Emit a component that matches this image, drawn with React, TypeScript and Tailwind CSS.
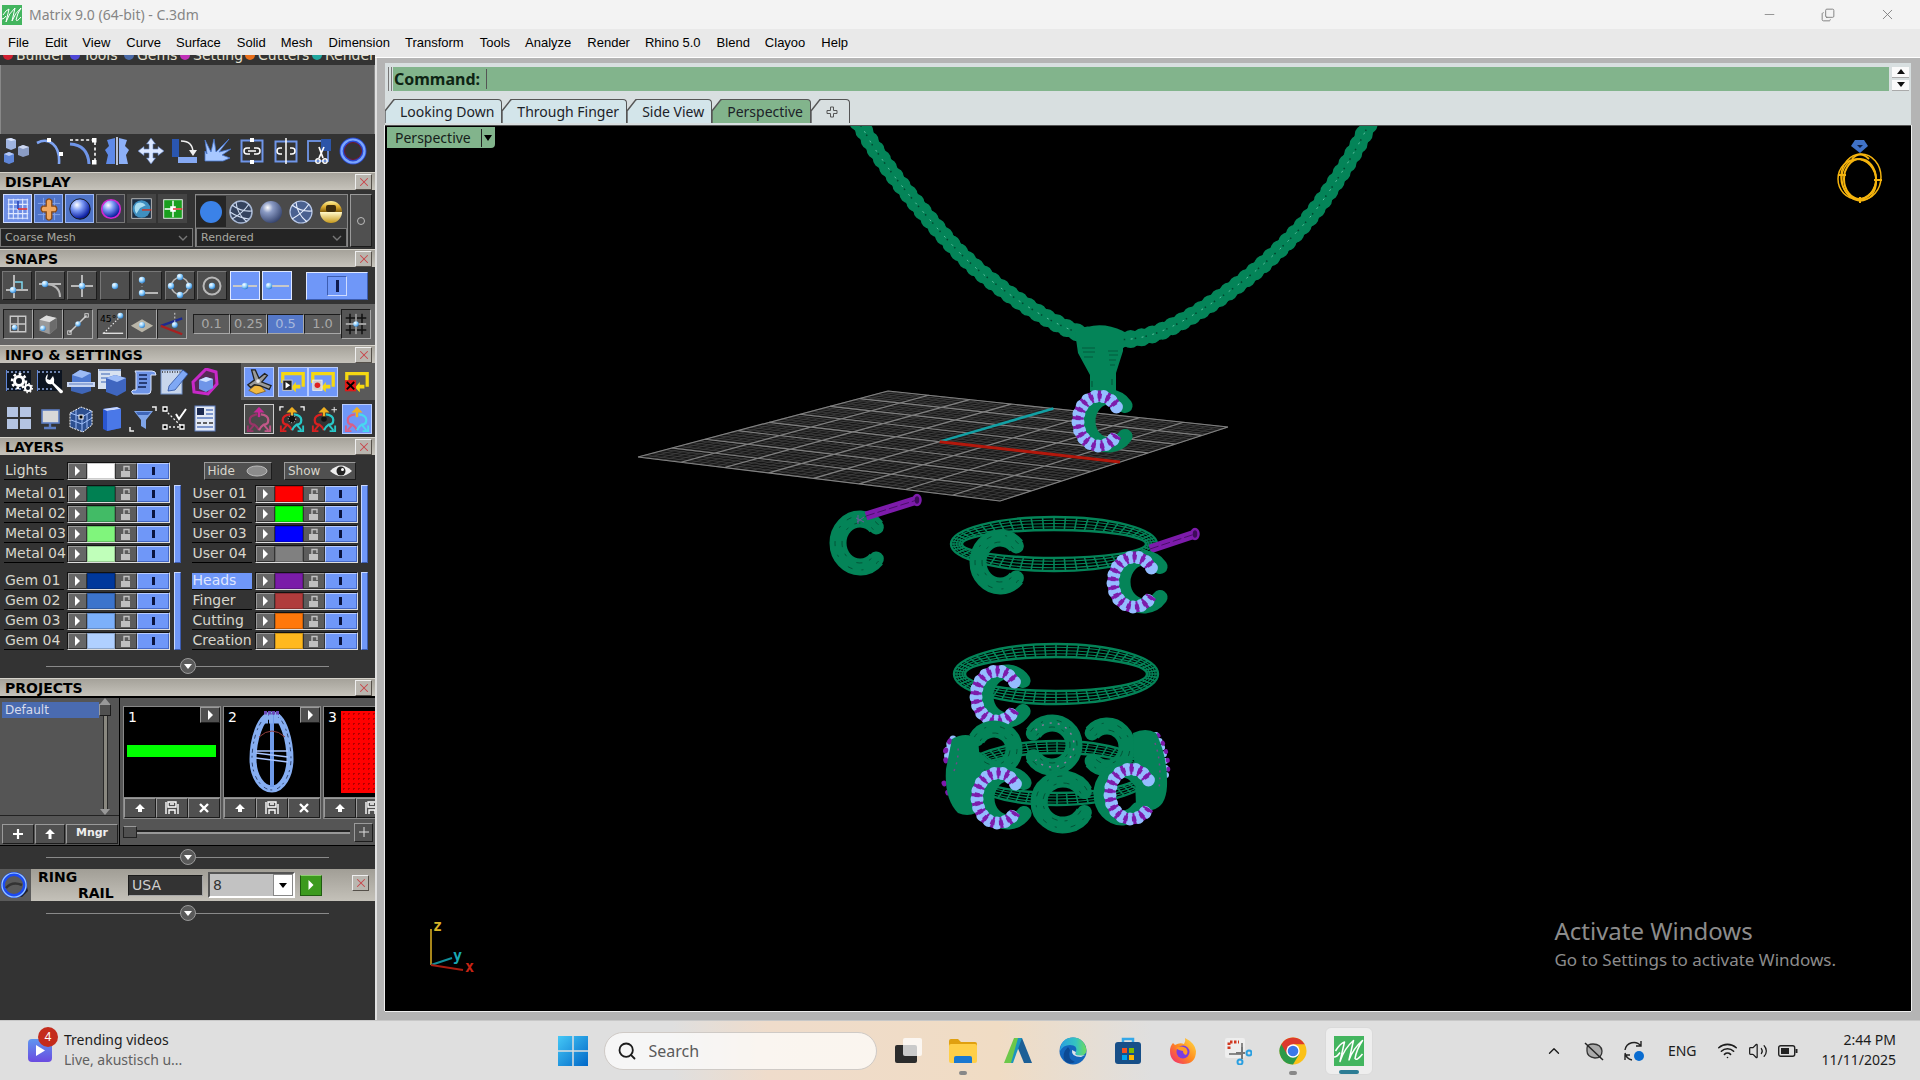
// Matrix desktop: jewelry CAD window with side panels, viewport and taskbar
import type { ReactNode } from "react"
import { Copy, Minus, X, Search, ChevronUp, Wifi, Volume2 } from "lucide-react"

const MENU = [
  "File", "Edit", "View", "Curve", "Surface", "Solid", "Mesh", "Dimension", "Transform",
  "Tools", "Analyze", "Render", "Rhino 5.0", "Blend", "Clayoo", "Help",
]

const UI = "font-['Noto_Sans','Open_Sans',sans-serif]"
const PANEL = "font-['DejaVu_Sans',sans-serif]"

const raised = "border border-t-[#9a9a9a] border-l-[#9a9a9a] border-b-[#1c1c1c] border-r-[#1c1c1c]"
const sunken = "border border-t-[#1c1c1c] border-l-[#1c1c1c] border-b-[#a8a8a8] border-r-[#a8a8a8]"

// ---------- icon helpers ----------

interface IcoProps {
  children: ReactNode
  className?: string
}

function Ico({ children, className = "w-7 h-7" }: IcoProps) {
  return (
    <svg viewBox="0 0 28 28" fill="none" className={`shrink-0 ${className}`} aria-hidden="true">
      {children}
    </svg>
  )
}

function Gradients() {
  return (
    <svg className="absolute w-0 h-0" aria-hidden="true">
      <defs>
        <radialGradient id="ballBlue" cx="0.35" cy="0.3" r="0.8">
          <stop offset="0" stopColor="#ffffff" />
          <stop offset="0.35" stopColor="#7d9bf5" />
          <stop offset="0.8" stopColor="#1226a8" />
          <stop offset="1" stopColor="#060c50" />
        </radialGradient>
        <radialGradient id="ballGray" cx="0.35" cy="0.3" r="0.8">
          <stop offset="0" stopColor="#ffffff" />
          <stop offset="0.3" stopColor="#8b9bc4" />
          <stop offset="1" stopColor="#2c3a63" />
        </radialGradient>
        <radialGradient id="dot" cx="0.35" cy="0.3" r="0.8">
          <stop offset="0" stopColor="#ffffff" />
          <stop offset="0.5" stopColor="#8fd0ff" />
          <stop offset="1" stopColor="#1d6fc0" />
        </radialGradient>
        <linearGradient id="gold" x1="0" y1="0" x2="0" y2="1">
          <stop offset="0" stopColor="#fff3a0" />
          <stop offset="0.25" stopColor="#e0b030" />
          <stop offset="0.48" stopColor="#8a6410" />
          <stop offset="0.52" stopColor="#fff6c4" />
          <stop offset="1" stopColor="#c79a1c" />
        </linearGradient>
        <linearGradient id="win" x1="0" y1="0" x2="1" y2="1">
          <stop offset="0" stopColor="#45c8f6" />
          <stop offset="1" stopColor="#0067c8" />
        </linearGradient>
        <linearGradient id="edge" x1="0" y1="0" x2="1" y2="0">
          <stop offset="0" stopColor="#2a9fe0" />
          <stop offset="0.6" stopColor="#35c4c0" />
          <stop offset="1" stopColor="#6fdc5a" />
        </linearGradient>
        <linearGradient id="fox" x1="1" y1="0" x2="0" y2="1">
          <stop offset="0" stopColor="#ffe14a" />
          <stop offset="0.5" stopColor="#ff8a1e" />
          <stop offset="1" stopColor="#f0207a" />
        </linearGradient>
        <linearGradient id="video" x1="0" y1="0" x2="0" y2="1">
          <stop offset="0" stopColor="#5f96f0" />
          <stop offset="1" stopColor="#6a4be0" />
        </linearGradient>
      </defs>
    </svg>
  )
}

function Dot({ x, y }: { x: number; y: number }) {
  return <circle cx={x} cy={y} r="3.2" fill="url(#dot)" />
}

function MatrixLogo({ className }: { className: string }) {
  return (
    <svg viewBox="0 0 20 20" className={className} aria-hidden="true">
      <rect width="20" height="20" fill="#43b55f" />
      <path d="M1 10Q4 5 7 4L4 17Q7 8 13 3L10 16Q13 8 19 3Q15 9 14 15Q15 17 19 12M0 14Q2 14 4 11" fill="none" stroke="#fff" strokeWidth="1" strokeLinejoin="round" />
    </svg>
  )
}

// ---------- title bar and menu ----------

function TitleBar() {
  return (
    <header className={`flex h-[29px] items-center bg-[#f3f3f3] pl-0.5 text-[14px] text-[#858585] ${UI}`}>
      <MatrixLogo className="w-5 h-5" />
      <span className="ml-[7px]">Matrix 9.0 (64-bit) - C.3dm</span>
      <div className="ml-auto flex items-center gap-[44px] pr-6 text-[#777]">
        <button aria-label="Minimize"><Minus size={15} strokeWidth={1.2} /></button>
        <button aria-label="Restore"><Copy size={14} strokeWidth={1.5} className="-scale-y-100" /></button>
        <button aria-label="Close"><X size={17} strokeWidth={1.2} /></button>
      </div>
    </header>
  )
}

function MenuBar() {
  return (
    <nav className="flex h-[26px] items-center gap-[15px] bg-[#e9e9e9] px-2 pt-0.5 font-['Liberation_Sans',sans-serif] text-[13px] text-black">
      {MENU.map((m) => (
        <button key={m} className="odd:pr-px">{m}</button>
      ))}
    </nav>
  )
}

// ---------- side panel building blocks ----------

function CloseButton() {
  return (
    <button aria-label="Close" className="flex h-4 w-[17px] items-center justify-center border border-t-[#eee] border-l-[#eee] border-b-[#55504a] border-r-[#55504a] bg-[#b9b6af] text-[#c8464a]">
      <X size={14} strokeWidth={1.8} />
    </button>
  )
}

function SectionHeader({ title }: { title: string }) {
  return (
    <div className="flex h-[18px] items-center justify-between border-t border-[#d5d2ca] bg-linear-to-b from-[#a5a29a] to-[#c6c3bb] pl-[5px] pr-[3px]">
      <h2 className="text-[14px] leading-[16px] font-bold text-black">{title}</h2>
      <CloseButton />
    </div>
  )
}

function Expander() {
  return (
    <div className="relative mx-[46px] flex h-4 items-center justify-center">
      <div className="absolute inset-x-0 top-2 h-px bg-[#8a8a8a]" />
      <button aria-label="Expand" className="relative flex h-4 w-4 items-center justify-center rounded-full border border-[#999] bg-[#5a5a5a]">
        <svg viewBox="0 0 8 5" className="h-[5px] w-2"><path d="M0 0H8L4 5Z" fill="#fff" /></svg>
      </button>
    </div>
  )
}

const TABS = [
  { name: "Builder", color: "bg-[#d02030]", width: "w-[67px]" },
  { name: "Tools", color: "bg-[#5048d8]", width: "w-[54px]" },
  { name: "Gems", color: "bg-[#4a6aa8]", width: "w-[56px]" },
  { name: "Setting", color: "bg-[#c030b8]", width: "w-[65px]" },
  { name: "Cutters", color: "bg-[#e8701c]", width: "w-[67px]" },
  { name: "Render", color: "bg-[#20a8a0]", width: "w-[66px]" },
]

function ToolTabs() {
  return (
    <div className="flex h-[10px] items-end overflow-hidden bg-[#333] pb-0.5 pl-[3px] text-[14px] leading-[16px] text-[#e4e0d0]">
      {TABS.map((t) => (
        <button key={t.name} className={`flex shrink-0 items-center gap-[3px] ${t.width}`}>
          <span className={`h-[10px] w-[10px] shrink-0 rounded-full ${t.color}`} />
          {t.name}
        </button>
      ))}
    </div>
  )
}

// ---------- toolbar ----------

const TOOLS: [string, ReactNode][] = [
  ["Array", <>
    <path d="M4 2l5-1 5 2v8l-5 2-5-2z" fill="#9fb4e0" /><path d="M4 2l5 2 5-1-5-2z" fill="#dfe8ff" />
    <path d="M2 17l5-2 5 2v8l-5 2-5-2z" fill="#5f86d8" /><path d="M2 17l5 2 5-2-5-2z" fill="#b7caf5" />
    <path d="M16 10l5-2 6 2v8l-6 2-5-2z" fill="#8a9cc4" /><path d="M16 10l5 2 6-2-6-2z" fill="#cfd9f2" />
  </>],
  ["Edit points", <>
    <path d="M1 6Q10 1 17 7T23 27" stroke="#7fa4f2" strokeWidth="2.6" />
    <rect x="11" y="1" width="4" height="4" fill="#fff" /><rect x="23" y="15" width="4" height="4" fill="#fff" />
  </>],
  ["Extend curve", <>
    <path d="M1 3H26V26" stroke="#fff" strokeWidth="1.6" strokeDasharray="3 2.4" />
    <path d="M1 7Q19 8 20 27" stroke="#6f95e8" strokeWidth="3" />
    <rect x="23" y="1" width="4.5" height="4.5" fill="#fff" /><rect x="23" y="23" width="4.5" height="4.5" fill="#fff" />
  </>],
  ["Mirror", <>
    <path d="M12 1L4 3 6 9 2 13 5 18 3 27H12Z" fill="#5f8ae8" /><path d="M16 1l8 2-2 6 4 4-3 5 2 9H16Z" fill="#8db0f7" />
    <path d="M14 0V28" stroke="#dfe8ff" strokeWidth="1.6" />
  </>],
  ["Move", <path d="M14 1l4.500 6H16v5h5V9.500l6 4.500-6 4.500V16h-5v5h2.500L14 27l-4.500-6H12v-5H7v2.500L1 14l6-4.500V12h5V7H9.500Z" fill="#dbe7ff" stroke="#5c7cc0" strokeWidth="0.6" />],
  ["Rotate", <>
    <rect x="2" y="2" width="7" height="18" fill="#2a56b0" /><rect x="8" y="20" width="19" height="6" fill="#86a9f2" />
    <path d="M11 4Q23 4 23 16" stroke="#eee" strokeWidth="1.5" /><path d="M19 13l4 6 4-6z" fill="#eee" />
  </>],
  ["Explode", <path d="M1 3l6 12L10 2l2 13L25 2 15 15l12-3-9 6 8 3-7 3H1V14l2 3z" fill="#a8c8ff" stroke="#4a78d0" strokeWidth="0.8" />],
  ["Link", <>
    <rect x="3.500" y="3.500" width="21" height="21" stroke="#6f95e8" strokeWidth="2" />
    <path d="M12 11H9q-3 0-3 3t3 3h3M16 11h3q3 0 3 3t-3 3h-3M10 14h8" stroke="#fff" strokeWidth="1.5" />
    <rect x="12" y="1" width="4" height="4" fill="#fff" /><rect x="12" y="23" width="4" height="4" fill="#fff" />
  </>],
  ["Split link", <>
    <rect x="3.500" y="4.500" width="21" height="20" stroke="#6f95e8" strokeWidth="2" />
    <path d="M10 11H8q-3 0-3 3t3 3h2M18 11h2q3 0 3 3t-3 3h-2M14 1v26" stroke="#fff" strokeWidth="1.5" />
  </>],
  ["Trim", <>
    <rect x="3" y="4" width="20" height="20" stroke="#6f95e8" strokeWidth="1.8" /><rect x="16" y="2" width="10" height="12" fill="#2c55a8" />
    <path d="M14 10l4 11M19 10l-5 11" stroke="#fff" strokeWidth="1.7" /><circle cx="13" cy="24" r="2.200" stroke="#fff" strokeWidth="1.400" /><circle cx="20" cy="24" r="2.200" stroke="#fff" strokeWidth="1.400" />
  </>],
  ["Ring", <>
    <circle cx="14" cy="14" r="11" stroke="#2a4ad0" strokeWidth="5" /><circle cx="14" cy="14" r="11.500" stroke="#7aa6ff" strokeWidth="2.200" /><circle cx="14" cy="14" r="8.500" stroke="#701828" strokeWidth="1" />
  </>],
]

function Toolbar() {
  return (
    <div className="flex h-[38px] items-center justify-between bg-[#333] pr-2 pb-1 pl-0.5">
      {TOOLS.map(([name, icon]) => (
        <button key={name} aria-label={name}><Ico>{icon}</Ico></button>
      ))}
    </div>
  )
}

// ---------- display ----------

const DISPLAY_ICONS: { name: string; tint: string; icon: ReactNode }[] = [
  { name: "Grid", tint: "bg-[#6f8fe6] border-[#cfdcff]", icon: <>
    <path d="M3 4H25M3 9H25M3 14H25M3 19H25M3 24H25M4 3V25M9 3V25M14 3V25M19 3V25M24 3V25" stroke="#dfe8ff" strokeWidth="1.2" />
    <path d="M14 5V14" stroke="#1230b0" strokeWidth="1.6" /><path d="M14 14H24" stroke="#e02020" strokeWidth="1.6" />
  </> },
  { name: "Origin", tint: "bg-[#4f74c8] border-[#9db8f5]", icon: <>
    <path d="M2 8H26M2 20H26M8 2V26M20 2V26" stroke="#86a4e8" /><path d="M11 5q3-4 6 0v6h4q3 3 0 6h-4v7q-3 4-6 0v-7H7q-3-3 0-6h4z" fill="#f0a860" stroke="#8a4810" strokeWidth="1.400" />
  </> },
  { name: "Shade", tint: "bg-[#4f74c8] border-[#9db8f5]", icon: <circle cx="14" cy="14" r="11" fill="url(#ballBlue)" stroke="#111" /> },
  { name: "Outline", tint: "bg-[#3c3c44] border-[#777]", icon: <circle cx="14" cy="14" r="10" fill="url(#ballBlue)" stroke="#d028d0" strokeWidth="1.800" /> },
  { name: "Environment", tint: "bg-[#444] border-[#444]", icon: <>
    <rect x="3" y="3" width="21" height="21" fill="#1d2f44" stroke="#ddd" strokeWidth="0.8" /><circle cx="13.500" cy="14" r="9.500" fill="#3f8fc0" />
    <path d="M8 8q6-3 10 2l-6 3-4 6q-4-6 0-11z" fill="#a8dcf0" /><path d="M14 15H24" stroke="#d03020" strokeWidth="1.500" />
  </> },
  { name: "Viewports", tint: "bg-[#444] border-[#444]", icon: <>
    <rect x="4" y="4" width="20" height="20" fill="#1aa01e" stroke="#eee" /><path d="M14 5V23M5 14H23" stroke="#fff" strokeWidth="1.500" /><path d="M11 11h6v6h-6z" fill="#fff" />
    <path d="M14 14H24" stroke="#e02020" strokeWidth="1.500" />
  </> },
]

const RENDER_ICONS: { name: string; icon: ReactNode }[] = [
  { name: "Flat", icon: <circle cx="14" cy="14" r="11" fill="#3b82e8" /> },
  { name: "Wireframe", icon: <>
    <circle cx="14" cy="14" r="11" fill="#34435e" stroke="#a8b8d4" strokeWidth="1.5" />
    <path d="M5 7Q14 14 25 13M9 4Q10 16 20 24M22 6Q16 15 5 21M3 14Q12 20 22 21" stroke="#cfdcf0" strokeWidth="1.1" />
  </> },
  { name: "Shaded", icon: <circle cx="14" cy="14" r="11" fill="url(#ballGray)" /> },
  { name: "Shaded wires", icon: <>
    <circle cx="14" cy="14" r="11" fill="#4a6190" stroke="#b8c8e8" strokeWidth="1.200" />
    <path d="M5 7Q14 14 25 13M9 4Q10 16 20 24M22 6Q16 15 5 21" stroke="#e8f0ff" strokeWidth="1.1" />
  </> },
  { name: "Metal", icon: <>
    <circle cx="14" cy="14" r="11" fill="url(#gold)" /><rect x="9" y="7" width="10" height="7" rx="2" fill="#3c2c0c" />
  </> },
]

const panelSelect =
  "w-full appearance-none bg-[#242424] bg-none px-1 font-['DejaVu_Sans',sans-serif] text-[11px] leading-[16px] text-[#a8a8a0] outline-none"

interface PanelSelectProps {
  label: string
  option: string
}

function PanelSelect({ label, option }: PanelSelectProps) {
  return (
    <div className="relative flex h-[19px] items-center border border-[#777] bg-[#242424]">
      <select aria-label={label} className={panelSelect}>
        <option>{option}</option>
      </select>
      <svg viewBox="0 0 10 6" fill="none" className="pointer-events-none absolute right-1 h-1.5 w-2.5"><path d="M1 1l4 4 4-4" stroke="#777" strokeWidth="1.4" /></svg>
    </div>
  )
}

function DisplayPanel() {
  return (
    <section className="bg-[#333]">
      <SectionHeader title="DISPLAY" />
      <div className="flex h-[59px] gap-0.5 pt-1 pb-0.5">
        <div className="flex w-[193px] flex-col justify-between">
          <div className="flex gap-0.5 pl-[3px]">
            {DISPLAY_ICONS.map((d) => (
              <button key={d.name} aria-label={d.name} className={`flex h-[29px] w-[29px] items-center justify-center border ${d.tint}`}>
                <Ico className="w-[26px] h-[26px]">{d.icon}</Ico>
              </button>
            ))}
          </div>
          <PanelSelect label="Mesh quality" option="Coarse Mesh" />
        </div>
        <div className="flex w-[153px] flex-col justify-between border border-b-0 border-[#888] bg-[#4a4a4a]">
          <div className="flex pt-px">
            {RENDER_ICONS.map((r, i) => (
              <button key={r.name} aria-label={r.name} className={`flex h-[31px] w-[30px] items-center justify-center ${i === 0 ? "bg-[#262626]" : ""}`}>
                <Ico>{r.icon}</Ico>
              </button>
            ))}
          </div>
          <PanelSelect label="Render mode" option="Rendered" />
        </div>
        <button aria-label="Toggle" className={`flex w-[22px] items-center justify-center bg-[#505050] ${raised}`}>
          <span className="h-2 w-2 rounded-full border border-[#bbb]" />
        </button>
      </div>
    </section>
  )
}

// ---------- snaps ----------

const SNAPS: { name: string; on?: boolean; icon: ReactNode }[] = [
  { name: "Perp", icon: <><path d="M11 3V26M3 18H25" stroke="#b8b8b8" strokeWidth="2" /><path d="M12 10h7v7" stroke="#7fd8f0" strokeWidth="1.500" /><Dot x={10} y={18} /></> },
  { name: "Tan", icon: <><path d="M3 12H25M10 12Q24 13 24 25" stroke="#b8b8b8" strokeWidth="2" /><Dot x={9} y={12} /></> },
  { name: "Int", icon: <><path d="M14 3V25M3 14H25" stroke="#b8b8b8" strokeWidth="2" /><Dot x={14} y={14} /></> },
  { name: "Point", icon: <Dot x={14} y={14} /> },
  { name: "Near", icon: <><path d="M10 21H25" stroke="#b8b8b8" strokeWidth="2" /><path d="M9 11V17" stroke="#999" strokeDasharray="1 2" /><Dot x={9} y={8} /><Dot x={9} y={21} /></> },
  { name: "Quad", icon: <><circle cx="14" cy="14" r="8.500" stroke="#b8b8b8" strokeWidth="1.600" /><Dot x={14} y={5} /><Dot x={14} y={23} /><Dot x={5} y={14} /><Dot x={23} y={14} /></> },
  { name: "Cen", icon: <><circle cx="14" cy="14" r="8.500" stroke="#b8b8b8" strokeWidth="2" /><Dot x={14} y={14} /></> },
  { name: "Mid", on: true, icon: <><path d="M2 14H26" stroke="#c8c8c8" strokeWidth="2" /><Dot x={14} y={14} /></> },
  { name: "End", on: true, icon: <><path d="M6 14H26" stroke="#c8c8c8" strokeWidth="2" /><Dot x={6} y={14} /></> },
]

const SNAPS_2: { name: string; icon: ReactNode }[] = [
  { name: "Grid snap", icon: <><path d="M5 5H23V23H5ZM14 5V23M5 14H23" stroke="#c8c8c8" strokeWidth="1.600" /><Dot x={10} y={18} /></> },
  { name: "Box snap", icon: <><path d="M4 9l8-5 12 3v12l-8 7-12-4z" fill="#999" /><path d="M4 9l12 3 8-5-12-3z" fill="#ddd" /><path d="M16 12v14l8-7V7z" fill="#6c6c6c" /><Dot x={8} y={19} /></> },
  { name: "Line snap", icon: <><path d="M4 24L24 4" stroke="#ccc" strokeWidth="1.800" /><rect x="22" y="2" width="4" height="4" stroke="#ddd" /><rect x="2" y="22" width="4" height="4" stroke="#ddd" /><Dot x={14} y={14} /></> },
]

const SNAPS_3: { name: string; icon: ReactNode }[] = [
  { name: "Angle snap", icon: <><text x="1" y="12" fill="#000" fontSize="10">45°</text><path d="M5 24L22 7" stroke="#eee" strokeWidth="1.300" strokeDasharray="1.500 2" /><path d="M4 24H26" stroke="#ddd" strokeWidth="1.500" /><Dot x={23} y={5} /></> },
  { name: "Plane snap", icon: <><path d="M14 9l12 7-12 7-12-7z" fill="#b9b5a8" /><Dot x={14} y={15} /></> },
  { name: "Axis snap", icon: <><path d="M2 16L25 8" stroke="#1c2a90" strokeWidth="2.500" /><path d="M2 16L25 25" stroke="#a82020" strokeWidth="2.500" /><path d="M17 2V12" stroke="#ddd" strokeDasharray="2 2" /><Dot x={17} y={15} /></> },
]

const STEPS = ["0.1", "0.25", "0.5", "1.0"]

function SnapsPanel() {
  return (
    <section className="bg-[#333]">
      <SectionHeader title="SNAPS" />
      <div className="flex h-[37px] items-center px-0.5">
        <div className="flex w-[290px] justify-between">
          {SNAPS.map((s) => (
            <button
              key={s.name}
              aria-label={s.name}
              className={`flex h-[29px] w-[30px] items-center justify-center border ${s.on ? "border-[#dfe8ff] bg-[#6f97f8]" : "border-t-[#777] border-l-[#777] border-b-[#1c1c1c] border-r-[#1c1c1c] bg-[#4e4e4e]"}`}
            >
              <Ico>{s.icon}</Ico>
            </button>
          ))}
        </div>
        <button aria-label="Snaps on" className="ml-3.5 flex h-7 w-[62px] items-center justify-center border border-t-[#dfe8ff] border-l-[#dfe8ff] border-b-[#3c5cb0] border-r-[#3c5cb0] bg-[#6f97f8]">
          <span className="flex h-5 w-5 items-center justify-center border border-t-[#3c5cb0] border-l-[#3c5cb0] border-b-[#cfdcff] border-r-[#cfdcff]">
            <span className="h-3 w-[3px] bg-[#101c50]" />
          </span>
        </button>
      </div>
      <div className="flex h-[41px] items-center gap-1 bg-[#666] pb-0.5 pl-[3px]">
        <div className="flex">
          {SNAPS_2.map((s) => (
            <button key={s.name} aria-label={s.name} className={`flex h-[30px] w-[30px] items-center justify-center bg-[#555] ${sunken}`}>
              <Ico className="w-6 h-6">{s.icon}</Ico>
            </button>
          ))}
        </div>
        <div className="flex">
          {SNAPS_3.map((s) => (
            <button key={s.name} aria-label={s.name} className={`flex h-[30px] w-[30px] items-center justify-center bg-[#555] ${sunken}`}>
              <Ico className="w-[26px] h-[26px]">{s.icon}</Ico>
            </button>
          ))}
        </div>
        <div className="ml-0.5 flex items-center">
          {STEPS.map((s) => (
            <button
              key={s}
              className={`h-5 w-[37px] text-center text-[13px] leading-[18px] ${sunken} ${s === "0.5" ? "bg-[#5578c8] text-[#a8b8dc]" : "bg-[#5c5c5c] text-[#a8a8a8]"}`}
            >
              {s}
            </button>
          ))}
          <button aria-label="Grid" className={`flex h-[30px] w-[30px] items-center justify-center bg-[#555] ${sunken}`}>
            <Ico className="w-6 h-6">
              <path d="M2 7H26M2 14H26M2 21H26M7 2V26M14 2V26M21 2V26" stroke="#111" strokeWidth="1.800" />
              <path d="M2 14H26M14 2V26" stroke="#ccc" strokeWidth="1.500" /><Dot x={14} y={14} />
            </Ico>
          </button>
        </div>
      </div>
    </section>
  )
}

// ---------- info & settings ----------

const film = <><rect x="1" y="2" width="25" height="21" fill="#0c1420" /><path d="M2 4H26M2 21H16" stroke="#8fa8dc" strokeWidth="1.400" strokeDasharray="2 2" /><path d="M1.500 2V23" stroke="#5f86d8" /></>

const INFO_1: [string, ReactNode][] = [
  ["Options", <>{film}<circle cx="14" cy="13" r="4.500" stroke="#fff" strokeWidth="3" /><circle cx="14" cy="13" r="7" stroke="#fff" strokeWidth="2.500" strokeDasharray="2.700 2.700" /><circle cx="23" cy="20" r="3" stroke="#fff" strokeWidth="2" /><circle cx="23" cy="20" r="4.500" stroke="#fff" strokeWidth="1.500" strokeDasharray="1.500 2" /></>],
  ["Tools", <>{film}<path d="M12 6a6 6 0 0 0-1 9q2 2 5 1l8 9q3 1 3-2l-9-8q1-4-1-7l-3 4-3-1z" fill="#fff" /></>],
  ["Print", <><path d="M5 7l8-5 11 3v9l-9 5-10-3z" fill="#4f7ad0" /><path d="M5 7l10 3 9-5-11-3z" fill="#9dbcf5" /><path d="M0 14h28v5H0z" fill="#c8d6f2" /><path d="M2 16h24" stroke="#5c7cc0" /><path d="M4 19h20v4l-9 3-11-3z" fill="#3f66b8" /></>],
  ["Object", <><rect x="0" y="1" width="23" height="20" fill="#d8e2f0" /><path d="M1 2H23M3 6H12M3 10H10M3 14H8" stroke="#6f8fc8" strokeWidth="1.400" /><path d="M8 10l9-3 11 3v13l-9 5-11-4z" fill="#3f66c0" /><path d="M8 10l11 4 9-4-11-3z" fill="#9dbcf7" /></>],
  ["Script", <><path d="M6 3h17q4 0 4 4h-5v15q0 4-3 4H4q-3-3 0-4h3V5z" fill="#6f95e8" stroke="#dfe8ff" strokeWidth="1" /><path d="M10 7h8M10 11h8M10 15h8M9 19h8" stroke="#102050" strokeWidth="1.600" /></>],
  ["Notes", <><rect x="1" y="2" width="21" height="24" fill="#c8d6ec" stroke="#7090c8" /><path d="M2 4H21" stroke="#333" strokeWidth="1.500" strokeDasharray="1 1.500" /><path d="M9 18L23 2l5 4-13 16-7 1z" fill="#7fa8f5" stroke="#2c50a0" strokeWidth="0.800" /></>],
  ["Boxes", <><path d="M2 14L15 1l10 3 1 12-9 10-14-2z" stroke="#c828c8" strokeWidth="3" fill="#582858" /><path d="M8 12l7-3 7 2v9l-7 4-7-3z" fill="#6f95e8" /><path d="M8 12l7 2 7-3-7-2z" fill="#cfe0ff" /></>],
]

const INFO_2: [string, ReactNode][] = [
  ["Windows", <path d="M2 2H13V12H2ZM15 2H26V12H15ZM2 14H13V24H2ZM15 14H26V24H15Z" fill="#b4c4e2" />],
  ["Screen", <><rect x="6" y="5" width="17" height="13" fill="#d8d8d8" stroke="#5c7cc0" strokeWidth="1.600" /><path d="M14 18v4M8 23h12" stroke="#5c7cc0" strokeWidth="2.400" /></>],
  ["Bounding box", <><path d="M3 8l11-6 11 4v14l-9 7-13-5z" fill="#2c4f90" stroke="#fff" strokeDasharray="2 1" /><path d="M3 8l12 4 10-6M15 12v15M9 5v19M20 9v14M4 15l11 4 10-6" stroke="#9dbcf7" /><rect x="12" y="10" width="4" height="4" fill="#000" stroke="#fff" /></>],
  ["Book", <><path d="M5 4l14-2 4 2v19l-14 3-4-2z" fill="#2a56d0" /><path d="M5 4l4 2 14-2-4-2z" fill="#c8d8ff" /><path d="M9 6v20l14-3V4z" fill="#4a78e8" /></>],
  ["Filter", <><path d="M5 6H24L17 15V24L12 21V15Z" fill="#7fa4e8" /><path d="M7 7H22L19 10H9Z" fill="#3f66b8" /><path d="M23 2h4v4M1 22v4h4" stroke="#eee" strokeWidth="1.500" /></>],
  ["Check points", <><path d="M5 5L24 24M5 22H22" stroke="#eee" strokeWidth="1.300" strokeDasharray="2 2" /><path d="M3 2h4v4H3zM3 20h4v4H3zM20 20h4v4h-4z" fill="#000" stroke="#fff" strokeWidth="1.300" /><path d="M16 9l3 5 7-10" stroke="#fff" strokeWidth="2" /></>],
  ["Report", <><rect x="4" y="1" width="20" height="25" fill="#e4eaf5" stroke="#5c7cc0" /><rect x="6" y="3" width="7" height="7" fill="#1c2a50" /><path d="M15 5h7M15 9h7M6 13h16M6 22h16" stroke="#5c7cc0" strokeWidth="1.400" /><path d="M6 18h16" stroke="#333" strokeWidth="1.400" strokeDasharray="4 2" /></>],
]

const loop = <path d="M3 15V5H25V19" stroke="#f5d812" strokeWidth="3.500" />
const loopArrow = <path d="M17 14v3h5v4h-5v4l-5-5z" fill="#f5d812" />

const axes = (left: string, right: string, mid: string) => (
  <>
    <path d="M14 12V2" stroke={mid} strokeWidth="2.600" /><path d="M8 7l6-6 6 6z" fill={mid} />
    <path d="M12 9Q4 10 4 15T9 20Q12 22 14 26" stroke={left} strokeWidth="2.400" /><path d="M16 9Q24 10 24 15T19 20Q16 22 14 26" stroke={right} strokeWidth="2.400" />
    <path d="M9 20L4 26M2 21v6h6" stroke={left} strokeWidth="2" /><path d="M19 20l5 6M26 21v6h-6" stroke={right} strokeWidth="2" />
  </>
)

const blueOn = "bg-[#6f97f8] border-[#b8ccff]"

const HISTORY: { name: string; tint: string; icon: ReactNode }[] = [
  { name: "Compass", tint: `mr-1 ${blueOn}`, icon: <><path d="M13 15L3 23l8 4 10-3z" fill="#f0b840" stroke="#805810" strokeWidth="0.800" /><path d="M6 1l4 0 4 9 6-5 3 2-6 7 10 4-2 4-10-4-6-1-4 3-3-3 7-5z" fill="#9a9a9a" stroke="#222" strokeWidth="1.400" /><circle cx="13" cy="13" r="2" fill="#eee" /></> },
  { name: "Play history", tint: blueOn, icon: <>{loop}{loopArrow}<rect x="3" y="12" width="10" height="11" fill="#222" stroke="#ccc" /><path d="M6 14v7l5-3.500z" fill="#fff" /></> },
  { name: "Record history", tint: blueOn, icon: <>{loop}{loopArrow}<rect x="3" y="12" width="10" height="11" fill="#ccc" stroke="#eee" /><circle cx="8" cy="17.500" r="3" fill="#e02020" /></> },
  { name: "Clear history", tint: "ml-1 border-transparent", icon: <>{loop}{loopArrow}<rect x="1" y="12" width="12" height="12" fill="#e01818" /><path d="M3 14l8 8M11 14l-8 8" stroke="#000" strokeWidth="2" /></> },
]

const AXES: { name: string; tint: string; icon: ReactNode }[] = [
  { name: "Axes off", tint: "bg-[#4a4a4a] border-[#ccc]", icon: axes("#983468", "#c05888", "#c82898") },
  { name: "Axes select", tint: "border-transparent", icon: <>{axes("#d82020", "#28c8c8", "#f0b020")}<path d="M1 5V1h4M23 1h4v4" stroke="#fff" strokeWidth="1.400" /><circle cx="14" cy="14" r="4" fill="#111" stroke="#fff" strokeDasharray="1 2" /></> },
  { name: "Axes add", tint: "border-transparent", icon: <>{axes("#d82020", "#28c8c8", "#f0b020")}<circle cx="14" cy="14" r="3" fill="#111" /><path d="M25 1v6M22 4h6" stroke="#eee" /></> },
  { name: "Axes on", tint: blueOn, icon: axes("#d86088", "#48d8f0", "#f0b020") },
]

function InfoPanel() {
  return (
    <section className="bg-[#333]">
      <SectionHeader title="INFO & SETTINGS" />
      {[
        { left: INFO_1, right: HISTORY, bg: "bg-[#5a5a5a]" },
        { left: INFO_2, right: AXES, bg: "" },
      ].map((row) => (
        <div key={row.right[0].name} className="flex h-[37px] items-center justify-between">
          <div className="flex gap-[3px] pl-[5px]">
            {row.left.map(([name, icon]) => (
              <button key={name} aria-label={name}><Ico>{icon}</Ico></button>
            ))}
          </div>
          <div className={`flex h-full w-[134px] items-center justify-between px-[3px] ${row.bg}`}>
            {row.right.map((r) => (
              <button key={r.name} aria-label={r.name} className={`flex h-[30px] w-[30px] items-center justify-center border ${r.tint}`}>
                <Ico className="w-[26px] h-[26px]">{r.icon}</Ico>
              </button>
            ))}
          </div>
        </div>
      ))}
    </section>
  )
}

// ---------- layers ----------

interface Layer {
  name: string
  color: string
}

const METALS: Layer[] = [
  { name: "Metal 01", color: "bg-[#008052]" },
  { name: "Metal 02", color: "bg-[#42bb66]" },
  { name: "Metal 03", color: "bg-[#80f57c]" },
  { name: "Metal 04", color: "bg-[#c0ffba]" },
]
const GEMS: Layer[] = [
  { name: "Gem 01", color: "bg-[#00389c]" },
  { name: "Gem 02", color: "bg-[#3c74cc]" },
  { name: "Gem 03", color: "bg-[#7cb0fa]" },
  { name: "Gem 04", color: "bg-[#b0d0ff]" },
]
const USERS: Layer[] = [
  { name: "User 01", color: "bg-[#ff0000]" },
  { name: "User 02", color: "bg-[#00ff00]" },
  { name: "User 03", color: "bg-[#0000ff]" },
  { name: "User 04", color: "bg-[#808080]" },
]
const OTHERS: Layer[] = [
  { name: "Heads", color: "bg-[#7a1ca8]" },
  { name: "Finger", color: "bg-[#b03c3c]" },
  { name: "Cutting", color: "bg-[#ff780a]" },
  { name: "Creation", color: "bg-[#ffb81e]" },
]

function LayerRow({ name, color }: Layer) {
  const active = name === "Heads"
  return (
    <div className="flex h-[18px] w-[166px] items-center justify-between">
      <span className={`h-[17px] w-[60px] border-b border-black pl-px text-[14px] leading-[15px] whitespace-nowrap ${active ? "bg-[#6f97f8] text-[#dfe6ff]" : "text-[#d8d6cc]"}`}>
        {name}
      </span>
      <div className="flex h-[18px] border border-t-[#111] border-l-[#111] border-b-[#ddd] border-r-[#ddd]">
        <button aria-label={`${name} menu`} className="flex w-[19px] items-center justify-center border border-t-[#999] border-l-[#999] border-[#333] bg-[#666]">
          <svg viewBox="0 0 5 10" className="h-2.5 w-[5px]"><path d="M0 0V10L5 5Z" fill="#fff" /></svg>
        </button>
        <button aria-label={`${name} color`} className={`w-[28px] border border-black/20 ${color}`} />
        <button aria-label={`${name} lock`} className="flex w-[22px] items-center justify-center border border-[#333] border-t-[#999] bg-[#5c5c5c]">
          <svg viewBox="0 0 10 12" fill="none" className="h-3 w-2.5"><path d="M3 6V1.500H8V5" stroke="#c0c0c0" strokeWidth="1.400" /><path d="M0 6H9V12H0Z" fill="#c0c0c0" /></svg>
        </button>
        <button aria-label={`${name} visible`} className="flex w-[32px] items-center justify-center border border-[#4468c8] border-t-[#b8ccff] border-l-[#b8ccff] bg-[#6f97f8]">
          <span className="h-2 w-[3px] bg-[#0a1440]" />
        </button>
      </div>
    </div>
  )
}

function LayerGroup({ layers }: { layers: Layer[] }) {
  return (
    <div className="flex justify-between">
      <div className="flex flex-col gap-0.5">
        {layers.map((l) => (
          <LayerRow key={l.name} {...l} />
        ))}
      </div>
      <div className="w-[7px] border border-[#3c5cb0] border-t-[#c8d8ff] border-l-[#c8d8ff] bg-[#6f97f8]" />
    </div>
  )
}

function LayersPanel() {
  return (
    <section className="h-[241px] bg-[#333]">
      <SectionHeader title="LAYERS" />
      <div className="grid h-[203px] grid-cols-2 content-start gap-x-[11px] gap-y-[9px] pt-[7px] pr-[7px] pl-[4px]">
        <div className="-mb-1 flex items-center"><LayerRow name="Lights" color="bg-white" /></div>
        <div className="-mb-1 flex items-center justify-between pr-3 pl-3 text-[12px] text-[#d8d6cc]">
          <button className={`flex h-[18px] w-[68px] items-center justify-between bg-[#505050] px-[3px] ${raised}`}>
            Hide
            <svg viewBox="0 0 22 12" className="h-3 w-[22px]"><ellipse cx="11" cy="6" rx="10" ry="5" fill="#8c8c8c" stroke="#bbb" /></svg>
          </button>
          <button className={`flex h-[18px] w-[72px] items-center justify-between bg-[#505050] px-[3px] ${raised}`}>
            Show
            <svg viewBox="0 0 22 12" className="h-3 w-[22px]"><path d="M0 6Q11 -5 22 6Q11 16 0 6Z" fill="#eee" /><circle cx="11" cy="6" r="4.500" fill="#222" /><circle cx="12.500" cy="4.500" r="1.500" fill="#fff" /></svg>
          </button>
        </div>
        <LayerGroup layers={METALS} />
        <LayerGroup layers={USERS} />
        <LayerGroup layers={GEMS} />
        <LayerGroup layers={OTHERS} />
      </div>
      <Expander />
    </section>
  )
}

// ---------- projects ----------

const greyButton = `flex items-center justify-center bg-[#505050] text-[#eee] ${raised}`

function Thumb({ index, children }: { index: number; children: ReactNode }) {
  return (
    <div className="w-[98px] shrink-0 border border-[#888] bg-black">
      <div className="relative h-[90px]">
        <span className="absolute top-0.5 left-1 text-[14px] leading-[16px] text-white">{index}</span>
        <button aria-label={`Project ${index} menu`} className={`absolute top-0 right-0 h-4 w-5 ${greyButton}`}>
          <svg viewBox="0 0 5 10" className="h-2.5 w-[5px]"><path d="M0 0V10L5 5Z" fill="#fff" /></svg>
        </button>
        {children}
      </div>
      <div className="grid h-[21px] grid-cols-3 border-t border-[#888]">
        <button aria-label="Load" className={greyButton}>
          <svg viewBox="0 0 10 10" className="h-2.5 w-2.5"><path d="M5 1L10 6H7V9H3V6H0Z" fill="#fff" /></svg>
        </button>
        <button aria-label="Save" className={greyButton}>
          <svg viewBox="0 0 14 14" fill="none" className="h-3.5 w-3.5"><path d="M1 1V13M3 1H11V6H3ZM13 3V13M4 13V9H10V13M5 3h4" stroke="#fff" strokeWidth="1.400" /></svg>
        </button>
        <button aria-label="Delete" className={greyButton}>
          <svg viewBox="0 0 10 10" className="h-2.5 w-2.5"><path d="M1 1L9 9M9 1L1 9" stroke="#fff" strokeWidth="2.400" /></svg>
        </button>
      </div>
    </div>
  )
}

function ProjectsPanel() {
  return (
    <section className="bg-[#333]">
      <SectionHeader title="PROJECTS" />
      <div className="flex h-[150px] border-t-2 border-b border-black bg-[#555]">
        <div className="flex w-[120px] shrink-0 flex-col border-r border-black">
          <div className="flex h-[118px] border-b border-[#222]">
            <div className="w-[99px] pt-1 pl-0.5">
              <button className="block h-4 w-full bg-[#4a6bb0] pl-[3px] text-left text-[12px] leading-[16px] text-[#d8dcec]">Default</button>
            </div>
            <div className="flex w-3 flex-col items-center">
              <svg viewBox="0 0 10 6" className="h-1.5 w-2.5"><path d="M5 0L10 6H0Z" fill="#999" /></svg>
              <div className={`h-3 w-3 bg-[#505050] ${raised}`} />
              <div className="w-[5px] flex-1 border-x border-[#2a2a2a] bg-[#8a8880]" />
              <svg viewBox="0 0 10 6" className="h-1.5 w-2.5"><path d="M0 0H10L5 6Z" fill="#999" /></svg>
            </div>
          </div>
          <div className="flex flex-1 items-center gap-px pt-[6px] pl-0.5">
            <button aria-label="Add project" className={`h-5 w-8 ${greyButton}`}>
              <svg viewBox="0 0 10 10" className="h-2.5 w-2.5"><path d="M5 0V10M0 5H10" stroke="#fff" strokeWidth="2.200" /></svg>
            </button>
            <button aria-label="Up" className={`h-5 w-[30px] ${greyButton}`}>
              <svg viewBox="0 0 10 10" className="h-2.5 w-2.5"><path d="M5 0L10 5H6.500V10H3.500V5H0Z" fill="#fff" /></svg>
            </button>
            <button className={`h-5 w-[52px] text-[11px] font-bold ${greyButton}`}>Mngr</button>
          </div>
        </div>
        <div className="flex min-w-0 flex-1 flex-col pt-2 pl-[3px]">
          <div className="flex gap-0.5 overflow-hidden">
            <Thumb index={1}><div className="absolute top-[38px] left-[3px] h-3 w-[89px] bg-[#00ff00]" /></Thumb>
            <Thumb index={2}>
              <svg viewBox="0 0 96 90" fill="none" className="h-[90px] w-24">
                <path d="M48 8C36 8 29 34 29 52S38 82 48 82 66 68 66 52 60 8 48 8Z" stroke="#86aef2" strokeWidth="7" />
                <path d="M48 7C35 8 28 34 28 52S38 83 48 83 67 68 67 52 61 8 48 7Z" stroke="#1c2c50" strokeWidth="0.800" strokeDasharray="4 3 2 5" />
                <path d="M48 8V80" stroke="#6f9ae8" strokeWidth="4" /><path d="M32 46L64 50M32 51L64 55M32 44L64 44" stroke="#a8c4ff" strokeWidth="1.300" />
                <path d="M40 6H56" stroke="#6a4ab8" strokeWidth="4" strokeDasharray="3 1" /><path d="M40 12H56" stroke="#86aef2" strokeWidth="9" strokeDasharray="4 1" /><path d="M35 30Q48 18 61 30" stroke="#903c3c" />
              </svg>
            </Thumb>
            <Thumb index={3}><div className="absolute top-[4px] left-[17px] h-[82px] w-[80px] bg-[#ff0000] bg-[radial-gradient(#b00000_1px,transparent_1px)] bg-[length:5px_5px]" /></Thumb>
          </div>
          <div className="flex flex-1 items-center gap-1 pr-0.5">
            <input
              type="range"
              aria-label="Scroll projects"
              defaultValue={0}
              className="h-3 min-w-0 flex-1 appearance-none bg-[linear-gradient(#222_50%,#999_50%)] bg-[length:100%_4px] bg-center bg-no-repeat [&::-webkit-slider-thumb]:h-3 [&::-webkit-slider-thumb]:w-3.5 [&::-webkit-slider-thumb]:appearance-none [&::-webkit-slider-thumb]:border [&::-webkit-slider-thumb]:border-[#222] [&::-webkit-slider-thumb]:border-t-[#999] [&::-webkit-slider-thumb]:bg-[#505050]"
            />
            <button aria-label="More" className={`h-[19px] w-[19px] ${greyButton}`}>
              <svg viewBox="0 0 10 10" className="h-2.5 w-2.5"><path d="M5 0V10M0 5H10" stroke="#ddd" /></svg>
            </button>
          </div>
        </div>
      </div>
      <div className="pt-[3px] pb-1"><Expander /></div>
    </section>
  )
}

function RingRail() {
  return (
    <section>
      <div className="flex h-8 items-center bg-linear-to-b from-[#a19e96] to-[#c4c1b9]">
        <div className="flex h-full w-[31px] items-center bg-[#5a5a5a]">
          <Ico>
            <path d="M16 24L27 16l1 4-6 6z" fill="#222" />
            <circle cx="14" cy="14" r="11" stroke="#1c4af0" strokeWidth="4" /><circle cx="14" cy="14" r="12" stroke="#9ccaff" strokeWidth="1.200" />
            <path d="M6 17Q12 10 22 14" stroke="#333" strokeWidth="2.500" />
          </Ico>
        </div>
        <h2 className="flex w-[97px] flex-col pl-[7px] text-[14px] leading-[16px] font-bold text-black">
          RING<span className="pl-10">RAIL</span>
        </h2>
        <input aria-label="Size system" defaultValue="USA" className={`h-[21px] w-[75px] bg-[#333] px-[3px] text-[14px] text-[#d0d0d0] ${sunken}`} />
        <div className="relative ml-[5px] flex h-[26px] w-[87px] border-2 border-t-[#555] border-l-[#555] border-r-white border-b-white bg-[#c2c2c2]">
          <select aria-label="Ring size" className="w-full appearance-none bg-transparent pl-[3px] text-[14px] text-[#333] outline-none">
            <option>8</option>
          </select>
          <span className="pointer-events-none absolute top-0 right-0 flex h-full w-5 items-center justify-center border border-[#888] bg-white">
            <svg viewBox="0 0 8 5" className="h-[5px] w-2"><path d="M0 0H8L4 5Z" fill="#000" /></svg>
          </span>
        </div>
        <button aria-label="Run" className="ml-[5px] flex h-[21px] w-[22px] items-center justify-center border border-[#1f5c10] border-t-[#8ccf70] bg-[#3c9a1e]">
          <svg viewBox="0 0 5 10" className="h-2.5 w-[6px]"><path d="M0 0V10L5 5Z" fill="#fff" /></svg>
        </button>
        <div className="mr-1.5 mb-1 ml-auto"><CloseButton /></div>
      </div>
      <div className="pt-1"><Expander /></div>
    </section>
  )
}

function SidePanel() {
  return (
    <aside className={`w-[375px] shrink-0 overflow-hidden bg-[#333] ${PANEL}`}>
      <ToolTabs />
      <div className="h-[69px] border-x border-[#888] bg-[#656565]" />
      <Toolbar />
      <DisplayPanel />
      <SnapsPanel />
      <InfoPanel />
      <LayersPanel />
      <ProjectsPanel />
      <RingRail />
    </aside>
  )
}

// ---------- viewport scene ----------

const GREEN = "#048458"
const VIOLET = "#7d1bab"
const GEM = "#94bdff"

type Pt = [number, number]

// Catmull-Rom spline through the points, as a cubic path
function spline(p: Pt[]) {
  let d = `M${p[0][0]} ${p[0][1]}`
  for (let i = 0; i < p.length - 1; i++) {
    const a = p[Math.max(i - 1, 0)]
    const b = p[i]
    const c = p[i + 1]
    const e = p[Math.min(i + 2, p.length - 1)]
    d += `C${b[0] + (c[0] - a[0]) / 6} ${b[1] + (c[1] - a[1]) / 6} ${c[0] - (e[0] - b[0]) / 6} ${c[1] - (e[1] - b[1]) / 6} ${c[0]} ${c[1]}`
  }
  return d
}

const CHAIN = spline([
  [852, 112], [863, 128], [875, 148], [898, 180], [931, 220], [966, 258], [1005, 290], [1045, 316],
  [1079, 332], [1108, 338], [1138, 337], [1171, 326], [1212, 302], [1253, 272], [1290, 238],
  [1318, 206], [1347, 163], [1366, 129], [1372, 114],
])

// Perspective mapping of the unit square onto the construction plane
const QUAD: [Pt, Pt, Pt, Pt] = [[638, 456], [1000, 500], [1228, 426], [888, 390]]

function project(u: number, v: number): Pt {
  const [[x0, y0], [x1, y1], [x2, y2], [x3, y3]] = QUAD
  const dx1 = x1 - x2, dx2 = x3 - x2, sx = x0 - x1 + x2 - x3
  const dy1 = y1 - y2, dy2 = y3 - y2, sy = y0 - y1 + y2 - y3
  const det = dx1 * dy2 - dx2 * dy1
  const g = (sx * dy2 - dx2 * sy) / det
  const h = (dx1 * sy - sx * dy1) / det
  const w = g * u + h * v + 1
  return [
    ((x1 - x0 + g * x1) * u + (x3 - x0 + h * x3) * v + x0) / w,
    ((y1 - y0 + g * y1) * u + (y3 - y0 + h * y3) * v + y0) / w,
  ]
}

function gridPath(n: number) {
  let d = ""
  for (let i = 0; i <= n; i++) {
    const t = i / n
    d += `M${project(t, 0)}L${project(t, 1)}M${project(0, t)}L${project(1, t)}`
  }
  return d
}

function ConstructionPlane() {
  return (
    <g>
      <path d={`M${QUAD.join("L")}Z`} fill="#161616" />
      <path d={gridPath(40)} stroke="#404040" strokeWidth="0.8" />
      <path d={gridPath(8)} stroke="#808080" strokeWidth="1.2" />
      <path d={`M${project(0.5, 0.5)}L${project(0.5, 1)}`} stroke="#12a0a4" strokeWidth="2.5" />
      <path d={`M${project(0.5, 0.5)}L${project(1, 0.5)}`} stroke="#b3180c" strokeWidth="3" />
    </g>
  )
}

// Open ring; open = half angle of the gap in degrees
function arc(x: number, y: number, rx: number, ry: number, flip = false, open = 42) {
  const a = (open * Math.PI) / 180
  const s = flip ? -1 : 1
  const ex = x + s * rx * Math.cos(a)
  return `M${ex} ${y - ry * Math.sin(a)}A${rx} ${ry} 0 1 ${flip ? 1 : 0} ${ex} ${y + ry * Math.sin(a)}`
}

interface LinkProps {
  x: number
  y: number
  flip?: boolean
  rx?: number
  ry?: number
  open?: number
}

function MetalLink({ x, y, flip, rx = 22, ry = 24, open = 42 }: LinkProps) {
  return (
    <g>
      <path d={arc(x, y, rx, ry, flip, open)} stroke={GREEN} strokeWidth="17" />
      <path d={arc(x, y, rx, ry, flip, open)} stroke={GREEN} strokeWidth="15" strokeLinecap="round" />
      <path d={arc(x, y, rx + 3, ry + 3, flip, open)} stroke="#02472f" strokeWidth="0.8" strokeDasharray="5 9 2 14" />
      <path d={arc(x, y, rx - 4, ry - 4, flip, open)} stroke="#02472f" strokeWidth="0.8" strokeDasharray="3 12 6 7" />
    </g>
  )
}

function GemLink({ x, y, side = 10 }: LinkProps & { side?: number }) {
  const d = arc(x, y, 21, 25, false, 34)
  return (
    <g>
      <path d={arc(x + side, y, 21, 24, false, 40)} stroke={GREEN} strokeWidth="15" strokeLinecap="round" />
      <path d={d} stroke={GEM} strokeWidth="9" />
      <path d={d} stroke={GEM} strokeWidth="13" strokeLinecap="round" strokeDasharray="0 8.4" />
      <path d={d} stroke={VIOLET} strokeWidth="11" strokeDasharray="2.600 5.800" strokeDashoffset="-3" />
      <path d={d} stroke={VIOLET} strokeWidth="5" strokeDasharray="4.200 4.200" strokeDashoffset="-2" />
    </g>
  )
}

interface BandProps {
  x: number
  y: number
  rx: number
  ry: number
  depth: number
}

// Wireframe bangle: nested ellipses joined by cross sections
function Band({ x, y, rx, ry, depth }: BandProps) {
  let ribs = ""
  const n = 56
  for (let i = 0; i < n; i++) {
    const a = (i / n) * Math.PI * 2
    const c = Math.cos(a)
    const s = Math.sin(a)
    ribs += `M${x + rx * c} ${y + ry * s}L${x + (rx - 11) * c} ${y + (ry - depth) * s}`
  }
  return (
    <g stroke={GREEN}>
      {[0, 0.25, 0.5, 0.75, 1].map((t) => (
        <ellipse key={t} cx={x} cy={y} rx={rx - 11 * t} ry={ry - depth * t} strokeWidth={t === 0 || t === 1 ? 2.4 : 1.2} />
      ))}
      <path d={ribs} strokeWidth="1.6" />
    </g>
  )
}

function Post({ x1, y1, x2, y2 }: { x1: number; y1: number; x2: number; y2: number }) {
  return (
    <g stroke={VIOLET}>
      <path d={`M${x1} ${y1}L${x2} ${y2}`} strokeWidth="9" />
      <ellipse cx={x2} cy={y2} rx="3.5" ry="5" strokeWidth="2.5" fill="#3c0c58" />
      <path d={`M${x1} ${y1}L${x2} ${y2}`} stroke="#3c0c58" strokeWidth="0.8" strokeDasharray="9 3" />
    </g>
  )
}

function Bracelet() {
  return (
    <g>
      <Band x={1057} y={772} rx={95} ry={32} depth={12} />
      <MetalLink x={994} y={748} rx={20} ry={20} open={30} flip />
      <MetalLink x={1107} y={746} rx={20} ry={21} flip />
      <MetalLink x={1052} y={744} rx={22} ry={22} open={32} flip />
      <path d={arc(1052, 744, 22, 22, true)} stroke="#8f7aa0" strokeWidth="1.5" strokeDasharray="2 6" />
      <path d="M953 738Q946 746 948 760" stroke={GEM} strokeWidth="7" strokeLinecap="round" strokeDasharray="0 6" />
      <path d="M950 740Q943 750 946 760M944 782L948 792" stroke={VIOLET} strokeWidth="5" strokeLinecap="round" strokeDasharray="1 9" />
      <path d="M952 738Q966 730 978 738L984 806Q972 818 958 812Q944 798 946 768Z" fill={GREEN} />
      <path d="M1156 734Q1166 748 1166 776" stroke={GEM} strokeWidth="6" strokeLinecap="round" strokeDasharray="0 7" />
      <path d="M1158 734Q1170 750 1168 776" stroke={VIOLET} strokeWidth="4" strokeLinecap="round" strokeDasharray="1 8" />
      <path d="M1133 732Q1146 726 1156 732Q1168 756 1167 785Q1166 806 1152 809L1136 804Z" fill={GREEN} />
      <path d="M954 770q5 -12 4 -25M1155 742q7 20 4 46" stroke="#6f4a8a" strokeWidth="1.5" strokeDasharray="2 5" />
      <MetalLink x={1063} y={801} rx={24} ry={23} open={27} />
      <GemLink x={998} y={797} />
      <GemLink x={1131} y={793} side={-9} />
    </g>
  )
}

function Scene() {
  return (
    <svg viewBox="385 125 1526 885" fill="none" className="absolute inset-0 h-full w-full" role="img" aria-label="Jewelry model">
      <ConstructionPlane />
      <path d={CHAIN} stroke={GREEN} strokeWidth="15" />
      <path d={CHAIN} stroke={GREEN} strokeWidth="18" strokeLinecap="round" strokeDasharray="0 11" />
      <path d={CHAIN} stroke="#5cc0a0" strokeWidth="1" strokeDasharray="2 9" />
      <path d={CHAIN} stroke="#02472f" strokeWidth="1.5" strokeDasharray="1.500 9.500" strokeDashoffset="-4" />
      <path d="M1075 331Q1098 318 1123 330L1123 350L1116 372V390H1090V374L1078 352Z" fill={GREEN} />
      <path d="M1082 347h13M1083 351h12M1084 356h9M1108 350h10M1109 354h9M1109 359h7M1110 364h5M1092 380v6M1112 378v6" stroke="#035a3c" strokeWidth="1.2" />
      <GemLink x={1099} y={420} />
      <MetalLink x={860} y={542} />
      <Post x1={866} y1={515} x2={917} y2={499} />
      <path d="M856 517l8 4M857 521l7-5M858 514v9" stroke="#6a5a9a" />
      <Band x={1054} y={543} rx={103} ry={27} depth={13} />
      <MetalLink x={1000} y={561} />
      <Post x1={1150} y1={548} x2={1195} y2={533} />
      <GemLink x={1134} y={581} />
      <Band x={1056} y={673} rx={102} ry={30} depth={13} />
      <GemLink x={997} y={695} />
      <Bracelet />

      {/* view marker */}
      <g stroke="#f5b40e" strokeWidth="1.500">
        <ellipse cx="1861" cy="176" rx="20" ry="23" /><ellipse cx="1857" cy="178" rx="19" ry="20" />
        <ellipse cx="1860" cy="178" rx="16" ry="20" strokeWidth="2" /><ellipse cx="1859" cy="179" rx="17" ry="21" transform="rotate(-12 1859 179)" />
        <path d="M1852 158Q1860 149 1869 158M1838 174h8M1874 179h8M1860 196v6" strokeWidth="2" />
      </g>
      <path d="M1851 145L1855 139H1864L1868 145L1860 152Z" fill="#3f72c8" /><path d="M1857 144h6l-3 3z" fill="#0c1c40" />

      {/* world axes */}
      <path d="M431 928V964" stroke="#a8861a" strokeWidth="2" />
      <path d="M431 964L452 957" stroke="#12909c" strokeWidth="2" />
      <path d="M431 964L463 969" stroke="#a81c10" strokeWidth="2" />
      <g className="font-['DejaVu_Sans_Mono',monospace] text-[15px] font-bold">
        <text x="433" y="930" fill="#d8b428">z</text>
        <text x="453" y="960" fill="#18a8b4">y</text>
        <text x="465" y="971" fill="#c82414">x</text>
      </g>
    </svg>
  )
}

// ---------- viewport frame ----------

const VIEW_TABS = ["Looking Down", "Through Finger", "Side View", "Perspective"]

function ViewTab({ children, active }: { children: ReactNode; active?: boolean }) {
  const plus = children === "+"
  return (
    <button className="flex h-6" aria-label={plus ? "New view" : undefined}>
      <svg viewBox="0 0 10 24" fill="none" className="h-6 w-2.5">
        <path d="M0 24V12L9 1H10V24Z" fill={active ? "#82b48c" : plus ? "#d8dfe0" : "#d3e5ea"} />
        <path d="M0 24V12L9 0.500H10" stroke="#555" strokeWidth="1.400" />
      </svg>
      <span className={`flex h-6 items-center rounded-tr border-t border-r border-[#555] pr-[7px] pl-[5px] text-[14px] text-[#1c2228] ${active ? "bg-[#82b48c]" : plus ? "" : "bg-[#d3e5ea]"}`}>
        {plus ? (
          <svg viewBox="0 0 12 12" fill="none" className="mr-1 h-3 w-3"><path d="M4.500 1h3v3.500H11v3H7.500V11h-3V7.500H1v-3h3.500z" stroke="#555" /></svg>
        ) : children}
      </span>
    </button>
  )
}

function Workspace() {
  return (
    <main className={`flex min-w-0 flex-1 flex-col bg-[#b4b4b4] ${UI}`}>
      <div className="h-[3px] border-b border-white bg-[#e9e9e9]" />
      <div className="flex min-h-0 flex-1 flex-col border-l-2 border-l-[#e0e0e0] pt-[5px] pr-[9px] pb-[9px] pl-2">
        <div className="flex h-[62px] flex-col bg-[#d8dfe0]">
          <div className="flex h-[31px] items-center gap-px pr-0.5 pl-[3px]">
            <div className="h-6 w-1 border-x border-[#777]" />
            <label className="flex h-6 flex-1 items-center bg-[#82b48c] px-px text-[16px] leading-6 font-bold text-[#0e2414]">
              Command:
              <input className="ml-1.5 h-5 flex-1 border-l border-[#555] bg-transparent outline-none" />
            </label>
            <div className="ml-0.5 flex w-[17px] flex-col gap-0.5">
              {["M0 5H8L4 0Z", "M0 0H8L4 5Z"].map((d, i) => (
                <button key={d} aria-label={i === 0 ? "Scroll up" : "Scroll down"} className="flex h-[11px] items-center justify-center border-b border-[#aaa] bg-[#fafafa]">
                  <svg viewBox="0 0 8 5" className="h-[5px] w-2"><path d={d} fill="#111" /></svg>
                </button>
              ))}
            </div>
          </div>
          <div className="flex flex-1 items-end pb-0.5">
            {VIEW_TABS.map((t) => (
              <ViewTab key={t} active={t === "Perspective"}>{t}</ViewTab>
            ))}
            <ViewTab>+</ViewTab>
          </div>
        </div>
        <div className="relative min-h-0 flex-1 overflow-hidden border-t border-[#555] bg-black shadow-[0_1px_0_#eee,-1px_0_0_#eee,1px_0_0_#eee]">
          <Scene />
          <button className="absolute top-px left-0.5 flex h-[21px] items-center rounded-br bg-[#82b48c] pr-[3px] pl-2 text-[14px] text-[#16201a]">
            Perspective
            <span className="mr-0.5 ml-2.5 h-[18px] w-px bg-[#222]" />
            <svg viewBox="0 0 8 6" className="h-1.5 w-2"><path d="M0 0H8L4 6Z" fill="#000" /></svg>
          </button>
          <div className="absolute right-[75px] bottom-[38px] text-[#8c8c8c]">
            <p className="text-[24px] leading-[32px]">Activate Windows</p>
            <p className="text-[17px] leading-[26px]">Go to Settings to activate Windows.</p>
          </div>
        </div>
      </div>
    </main>
  )
}

// ---------- taskbar ----------

const APPS: { name: string; running?: boolean; icon: ReactNode }[] = [
  { name: "Task view", icon: <><rect x="1" y="8" width="22" height="18" rx="2" fill="#2c2c2c" /><rect x="9" y="1" width="19" height="18" rx="2" fill="#fff" fillOpacity="0.750" /></> },
  { name: "File Explorer", running: true, icon: <><path d="M0 4q0-2 2-2h7l3 3h14q2 0 2 2v17H0z" fill="#e0a010" /><rect y="7" width="28" height="19" rx="2" fill="#ffcf48" /><path d="M5 26v-5q0-2 2-2h14q2 0 2 2v5z" fill="#1a78d0" /></> },
  { name: "Autodesk", icon: <><path d="M10 1h8l10 25h-8l-7-17z" fill="#1c5f96" /><path d="M18 1L9 26H4L13 1z" fill="#1c94c0" /><path d="M0 26L10 1h4L7 26z" fill="#6cc84a" /></> },
  { name: "Edge", icon: <><circle cx="14" cy="14" r="13.500" fill="#1466bc" /><path d="M1 12Q3 0.500 14 0.500T27.500 13Q27 19 20 19 15 18 17 15 19 8 11 8 4 8 1 14Z" fill="url(#edge)" /><path d="M11 13Q8 22 16 25 10 28 6 24 2 17 9 10Z" fill="#0c4a94" /><path d="M17 15Q14 20 26 18L22 20Q12 20 13 13Z" fill="#dfe4ea" /></> },
  { name: "Store", icon: <><path d="M9 6V2h10v4" stroke="#35a8e8" strokeWidth="2.500" /><rect x="1" y="5" width="26" height="22" rx="3" fill="#174f88" /><path d="M8 11h5v5H8z" fill="#f25022" /><path d="M15 11h5v5h-5z" fill="#7fba00" /><path d="M8 18h5v5H8z" fill="#00a4ef" /><path d="M15 18h5v5h-5z" fill="#ffb900" /></> },
  { name: "Firefox", icon: <><path d="M4 6q1 1 2 2 5-3 9-1 2-3 1-6 10 5 11 13 0 13-13 13Q1 26 1 14 1 9 4 6Z" fill="url(#fox)" /><circle cx="14" cy="15" r="6.500" fill="#7a3ce0" /><path d="M7 11q5-3 10 0 3 4 0 7-3-1-3-4-4 0-7-3z" fill="#ff9a28" /></> },
  { name: "Snipping Tool", icon: <><rect x="1" y="1" width="20" height="20" rx="2" fill="#eee" /><path d="M5 12V5h10" stroke="#d03820" strokeWidth="3" strokeDasharray="2.500 1.500" /><path d="M18 6V17H5" stroke="#888" strokeWidth="2" /><path d="M12 16h9M18 10v12" stroke="#777" strokeWidth="2" /><circle cx="25" cy="16" r="2.500" stroke="#2a9fe0" strokeWidth="2" /><circle cx="16" cy="25" r="2.500" stroke="#2a9fe0" strokeWidth="2" /></> },
  { name: "Chrome", running: true, icon: <><circle cx="14" cy="14" r="13.500" fill="#fbc117" /><path d="M14 14L2.300 7.250A13.500 13.500 0 0 1 25.700 7.250H14Z" fill="#dc3a2c" /><path d="M14 14L2.300 7.250A13.500 13.500 0 0 0 14 27.500L20 17.500Z" fill="#2c9a48" /><path d="M2.300 7.250L8.200 17.400 14 7.250Z" fill="#dc3a2c" /><circle cx="14" cy="14" r="6.700" fill="#fff" /><circle cx="14" cy="14" r="5.300" fill="#3a78e8" /></> },
]

function Taskbar() {
  return (
    <footer className={`relative flex h-[60px] shrink-0 items-center justify-between border-t border-[#c8c8c8] bg-[#dfdfdf] bg-[linear-gradient(90deg,transparent_35%,#efdccb_40%,#f0dcc4_52%,transparent_60%)] px-6 text-[#1c1c1c] ${UI}`}>
      <div className="flex w-[534px] items-center gap-2.5">
        <div className="relative">
          <svg viewBox="0 0 28 28" className="h-7 w-[30px]"><rect x="3" y="2" width="24" height="23" rx="4" fill="url(#video)" /><path d="M11 8V19L20 13.500Z" fill="#fff" /></svg>
          <span className="absolute -top-2.5 left-3.5 flex h-5 w-5 items-center justify-center rounded-full bg-[#c42b1c] text-[12px] text-white">4</span>
        </div>
        <div className="pb-px text-[14px] leading-[20px]">
          <p>Trending videos</p>
          <p className="text-[#606060]">Live, akustisch u...</p>
        </div>
      </div>
      <div className="flex items-center">
        <button aria-label="Start" className="mr-4">
          <svg viewBox="0 0 28 28" className="h-[30px] w-[30px]"><path d="M0 0H13.300V13.300H0ZM14.700 0H28V13.300H14.700ZM0 14.700H13.300V28H0ZM14.700 14.700H28V28H14.700Z" fill="url(#win)" /></svg>
        </button>
        <label className="flex h-[38px] w-[273px] items-center gap-3 rounded-full border border-[#cfcac6] bg-white/70 px-3">
          <Search size={20} strokeWidth={2.2} />
          <input placeholder="Search" aria-label="Search" className="min-w-0 flex-1 bg-transparent text-[16px] outline-none placeholder:text-[#5a5a5a]" />
        </label>
        <div className="ml-1 flex">
          {APPS.map((a) => (
            <button key={a.name} aria-label={a.name} className="relative flex h-12 w-[55px] items-center justify-center">
              <Ico>{a.icon}</Ico>
              {a.running && <span className="absolute bottom-0 h-1 w-2 rounded-full bg-[#888]" />}
            </button>
          ))}
          <button aria-label="Matrix" className="relative mx-1 flex h-12 w-12 items-center justify-center rounded-md border border-[#dadada] bg-[#eee]">
            <MatrixLogo className="h-[30px] w-[30px]" />
            <span className="absolute bottom-0 h-1 w-5 rounded-full bg-[#2c7c94]" />
          </button>
        </div>
      </div>
      <div className="flex w-[520px] items-center justify-end text-[14px]">
        <button aria-label="Hidden icons"><ChevronUp size={18} strokeWidth={1.8} /></button>
        <button aria-label="Focus" className="ml-[20px]">
          <svg viewBox="0 0 22 22" fill="none" className="h-[22px] w-[22px]"><path d="M4 8q0-4 6-4 8 0 9 7 0 7-7 7-8-1-8-7z" fill="#aaa" stroke="#333" strokeWidth="1.300" /><path d="M2 3L20 20" stroke="#222" strokeWidth="1.500" /></svg>
        </button>
        <button aria-label="Update" className="ml-[18px]">
          <svg viewBox="0 0 22 22" fill="none" className="h-[22px] w-[22px]"><path d="M2 10A9 9 0 0 1 18 6M18 1v5h-5M2 13a9 9 0 0 0 7 7M2 20v-5h5" stroke="#222" strokeWidth="1.400" /><circle cx="16" cy="16" r="5" fill="#0a6cd0" /></svg>
        </button>
        <button className="ml-[23px]">ENG</button>
        <button aria-label="Network and sound" className="ml-5 flex items-center gap-2.5">
          <Wifi size={21} strokeWidth={1.8} />
          <Volume2 size={20} strokeWidth={1.5} />
          <svg viewBox="0 0 20 12" fill="none" className="h-3 w-5"><rect x="0.700" y="0.700" width="16" height="10.600" rx="2" stroke="#222" strokeWidth="1.400" /><rect x="3" y="3" width="8" height="6" fill="#222" /><path d="M18.500 4v4" stroke="#222" strokeWidth="2" /></svg>
        </button>
        <div className="ml-6 pb-px text-right leading-[20px]">
          <p>2:44 PM</p>
          <p>11/11/2025</p>
        </div>
      </div>
    </footer>
  )
}

export default function App() {
  return (
    <div className="flex h-screen w-full flex-col overflow-hidden bg-[#e9e9e9]">
      <Gradients />
      <TitleBar />
      <MenuBar />
      <div className="flex min-h-0 flex-1">
        <SidePanel />
        <Workspace />
      </div>
      <Taskbar />
    </div>
  )
}
